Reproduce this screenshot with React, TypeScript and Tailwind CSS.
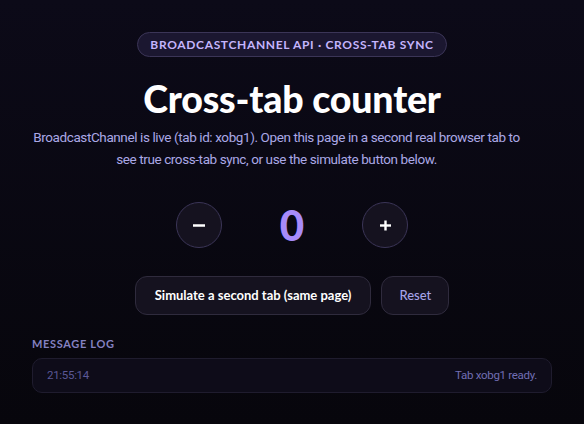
import React from "react";

export default function App() {
  return (
    <div
      className="min-h-[424px] w-full bg-gradient-to-b from-[#0c0a18] to-[#07060c] text-white"
      style={{ fontFamily: 'Lato, "Noto Sans", sans-serif' }}
    >
      <div className="mx-auto flex w-[520px] flex-col items-center pt-[32px]">
        <div className="rounded-full border border-[#3b3557] bg-[#1b1730] px-[12px] py-[4px] text-[12px] font-bold leading-[15px] tracking-[0.055em] text-[#c4b5fd]">
          BROADCASTCHANNEL API · CROSS-TAB SYNC
        </div>
        <h1 className="mt-[19px] text-[37.5px] font-black leading-[46px] tracking-[-0.005em] text-white">
          Cross-tab counter
        </h1>
        <p
          className="mt-[4px] w-[489px] self-start text-center text-[13.5px] leading-[22px] tracking-[-0.4px] text-[#aba8e6]"
          style={{ fontFamily: 'Roboto, Lato, sans-serif' }}
        >
          BroadcastChannel is live (tab id: xobg1). Open this page in a second real browser tab to see true cross-tab sync, or use the simulate button below.
        </p>
        <div className="mt-[31px] flex items-center gap-[46px]">
          <button
            aria-label="Decrement"
            className="flex h-[46px] w-[46px] items-center justify-center rounded-full border border-[#3b3557] bg-[#15121f] text-white"
          >
            <svg width="12" height="12" viewBox="0 0 12 12">
              <line x1="0" y1="6.5" x2="12" y2="6.5" stroke="white" strokeWidth="2.5" />
            </svg>
          </button>
          <div className="w-[48px] text-center text-[42px] font-black leading-[48px] text-[#a78bfa]">
            0
          </div>
          <button
            aria-label="Increment"
            className="flex h-[46px] w-[46px] items-center justify-center rounded-full border border-[#3b3557] bg-[#15121f] text-white"
          >
            <svg width="11" height="11" viewBox="0 0 11 11">
              <line x1="0" y1="5.5" x2="11" y2="5.5" stroke="white" strokeWidth="2.4" />
              <line x1="5.5" y1="0.5" x2="5.5" y2="10.5" stroke="white" strokeWidth="2.4" />
            </svg>
          </button>
        </div>
        <div className="mt-[27px] flex gap-[10px]">
          <button className="h-[39px] rounded-[12px] border border-[#2f2b3d] bg-[#15121f] px-[19px] text-[13px] font-bold text-white">
            Simulate a second tab (same page)
          </button>
          <button className="h-[39px] rounded-[12px] border border-[#2f2b3d] bg-[#15121f] px-[17px] text-[13px] font-medium text-[#a5a3e8]">
            Reset
          </button>
        </div>
        <div className="mt-[22px] w-full">
          <div className="text-[11px] font-bold leading-[14px] tracking-[0.06em] text-[#8481c0]">
            MESSAGE LOG
          </div>
          <div
            className="mt-[7px] flex h-[35px] items-center justify-between rounded-[10px] border border-[#1f1c2e] bg-[#0e0c19] px-[14px] text-[11.5px] tracking-[-0.3px] text-[#716eb3]"
            style={{ fontFamily: 'Roboto, Lato, sans-serif' }}
          >
            <span className="text-[#5b5896]">21:55:14</span>
            <span>Tab xobg1 ready.</span>
          </div>
        </div>
      </div>
    </div>
  );
}
